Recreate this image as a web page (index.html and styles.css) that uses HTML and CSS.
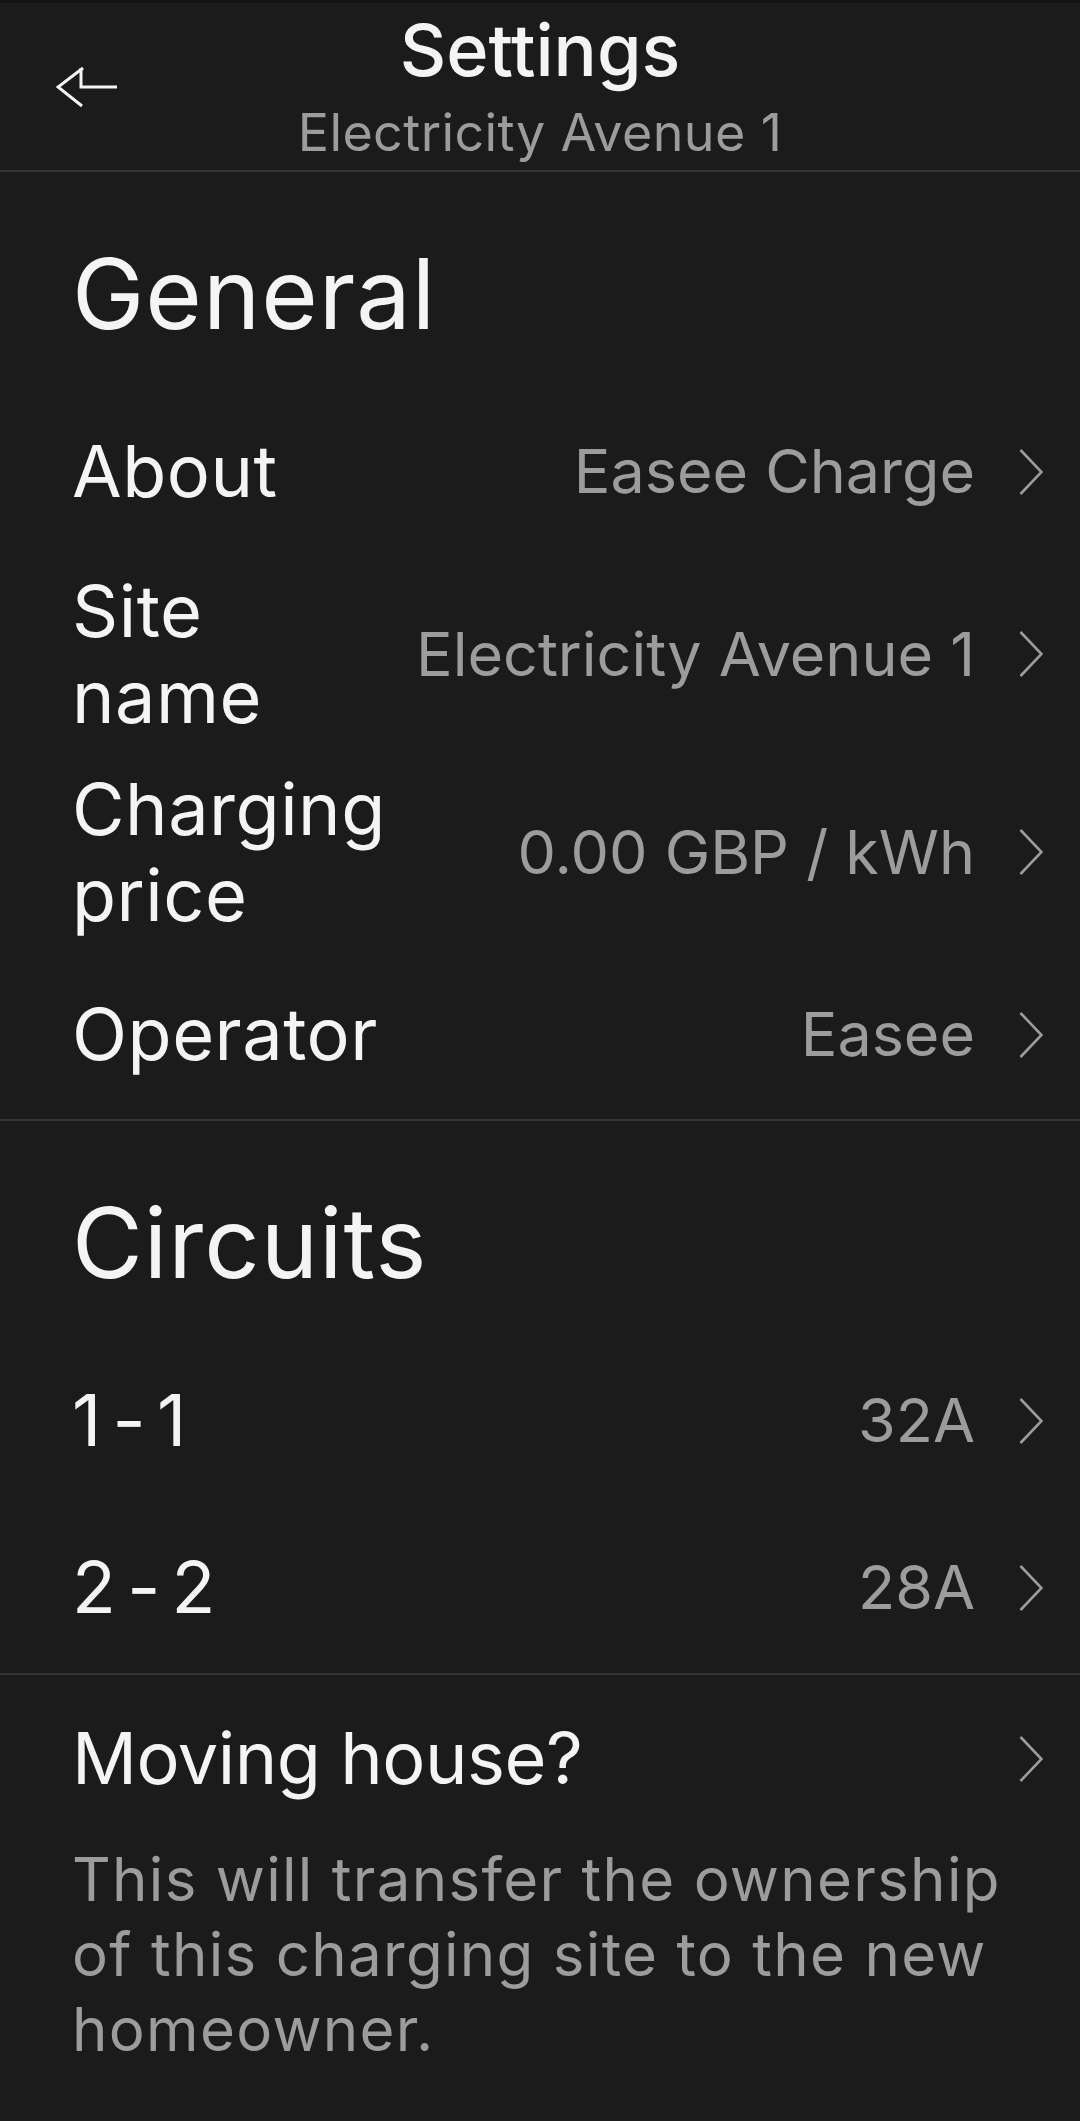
FILE: index.html
```html
<!DOCTYPE html>
<html lang="en">
<head>
<meta charset="utf-8">
<title>Settings</title>
<link rel="stylesheet" href="styles.css">
</head>
<body>
<header class="topbar">
  <div class="topbar-back">
    <svg class="back-icon" width="62" height="42" viewBox="0 0 62 42" aria-hidden="true">
      <path d="M27 2 L2 21 L26 40" />
      <path d="M25 2 L25 21 L61 21" />
    </svg>
  </div>
  <div class="topbar-titles">
    <div class="topbar-title">Settings</div>
    <div class="topbar-subtitle">Electricity Avenue 1</div>
  </div>
  <div class="topbar-spacer"></div>
</header>

<section class="section">
  <h2 class="section-title">General</h2>
  <div class="row">
    <div class="row-label">About</div>
    <div class="row-value">Easee Charge</div>
    <svg class="chev" width="24" height="46" viewBox="0 0 24 46" aria-hidden="true"><path d="M1.5 1 L22.5 23 L1.5 45"/></svg>
  </div>
  <div class="row">
    <div class="row-label">Site name</div>
    <div class="row-value">Electricity Avenue 1</div>
    <svg class="chev" width="24" height="46" viewBox="0 0 24 46" aria-hidden="true"><path d="M1.5 1 L22.5 23 L1.5 45"/></svg>
  </div>
  <div class="row">
    <div class="row-label">Charging price</div>
    <div class="row-value">0.00 GBP / kWh</div>
    <svg class="chev" width="24" height="46" viewBox="0 0 24 46" aria-hidden="true"><path d="M1.5 1 L22.5 23 L1.5 45"/></svg>
  </div>
  <div class="row">
    <div class="row-label">Operator</div>
    <div class="row-value">Easee</div>
    <svg class="chev" width="24" height="46" viewBox="0 0 24 46" aria-hidden="true"><path d="M1.5 1 L22.5 23 L1.5 45"/></svg>
  </div>
</section>

<section class="section section-circuits">
  <h2 class="section-title">Circuits</h2>
  <div class="row">
    <div class="row-label row-label-circuit">1 - 1</div>
    <div class="row-value">32A</div>
    <svg class="chev" width="24" height="46" viewBox="0 0 24 46" aria-hidden="true"><path d="M1.5 1 L22.5 23 L1.5 45"/></svg>
  </div>
  <div class="row">
    <div class="row-label row-label-circuit">2 - 2</div>
    <div class="row-value">28A</div>
    <svg class="chev" width="24" height="46" viewBox="0 0 24 46" aria-hidden="true"><path d="M1.5 1 L22.5 23 L1.5 45"/></svg>
  </div>
</section>

<section class="moving">
  <div class="row">
    <div class="row-label row-label-moving">Moving house?</div>
    <svg class="chev" width="24" height="46" viewBox="0 0 24 46" aria-hidden="true"><path d="M1.5 1 L22.5 23 L1.5 45"/></svg>
  </div>
  <p class="moving-text">This will transfer the ownership of this charging site to the new homeowner.</p>
</section>
</body>
</html>
```
FILE: styles.css
```css
* { box-sizing: border-box; }

html, body {
  margin: 0;
  padding: 0;
  background: #1b1b1b;
}

body {
  font-family: "Inter", "Noto Sans", sans-serif;
  color: #f4f4f4;
  width: 1080px;
  min-height: 2121px;
}

/* Top bar */
.topbar {
  display: grid;
  grid-template-columns: 1fr auto 1fr;
  align-items: center;
  padding: 4px 0 7px;
  border-top: 3px solid #141414;
  border-bottom: 2px solid #343434;
}

.topbar-back {
  padding-left: 56px;
  margin-top: 4px;
  display: flex;
  align-items: center;
}

.back-icon path {
  fill: none;
  stroke: #f4f4f4;
  stroke-width: 3;
  stroke-linecap: butt;
  stroke-linejoin: miter;
}

.topbar-titles {
  display: flex;
  flex-direction: column;
  align-items: center;
}

.topbar-title {
  font-size: 72px;
  line-height: 86px;
  font-weight: 500;
  color: #f4f4f4;
}

.topbar-subtitle {
  margin-top: 9px;
  font-size: 52px;
  line-height: 61px;
  letter-spacing: 0.4px;
  color: #9c9c9c;
}

/* Sections */
.section {
  padding: 64px 37px 1px 72px;
  border-bottom: 2px solid #343434;
}

.section-circuits {
  padding-bottom: 2px;
}

.section-title {
  margin: 0 0 37px;
  font-size: 97px;
  line-height: 115px;
  font-weight: 400;
  letter-spacing: 1px;
  color: #f4f4f4;
}

.row {
  display: flex;
  align-items: center;
  min-height: 167px;
  padding: 12.5px 0;
}

.row-label {
  flex: 1 1 auto;
  min-width: 0;
  padding-right: 40px;
  font-size: 72px;
  line-height: 86.5px;
  letter-spacing: 0.5px;
  color: #f4f4f4;
}

.row-label-circuit {
  word-spacing: -10px;
}

.row-label-moving {
  letter-spacing: -0.5px;
}

.row-value {
  flex: 0 0 auto;
  font-size: 61px;
  line-height: 73px;
  color: #9c9c9c;
  white-space: nowrap;
}

.chev {
  flex: 0 0 auto;
  margin-left: 44px;
}

.chev path {
  fill: none;
  stroke: #9c9c9c;
  stroke-width: 2.6;
  stroke-linejoin: miter;
}

/* Moving house */
.moving {
  padding: 0 37px 0 72px;
}

.moving-text {
  margin: 0;
  font-size: 60px;
  line-height: 75px;
  letter-spacing: 1.3px;
  color: #9c9c9c;
}
```
